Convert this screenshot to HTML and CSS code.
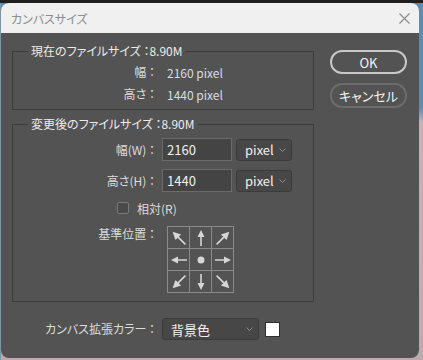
FILE: index.html
```html
<!DOCTYPE html>
<html lang="ja">
<head>
<meta charset="utf-8">
<link rel="stylesheet" href="styles.css">
</head>
<body>
<div class="screen">
  <div class="dialog">
    <div class="titlebar">
      <span class="title">カンバスサイズ</span>
      <svg class="close" width="11" height="11" viewBox="0 0 11 11"><path d="M0.5 0.5 L10.5 10.5 M10.5 0.5 L0.5 10.5" stroke="#8a8a8a" stroke-width="1.1" fill="none"/></svg>
    </div>
    <div class="content">
      <div class="main">
        <fieldset class="group g1">
          <legend>現在のファイルサイズ ：8.90M</legend>
          <div class="row info"><span class="label">幅 ：</span><span class="value">2160 pixel</span></div>
          <div class="row info"><span class="label">高さ ：</span><span class="value">1440 pixel</span></div>
        </fieldset>
        <fieldset class="group g2">
          <legend>変更後のファイルサイズ ：8.90M</legend>
          <div class="row field"><span class="label">幅(W) ：</span><div class="input">2160</div><div class="select unit"><span>pixel</span><svg class="chev" width="7" height="4" viewBox="0 0 7 4"><path d="M0.5 0.5 L3.5 3.5 L6.5 0.5" stroke="#8e8e8e" fill="none"/></svg></div></div>
          <div class="row field"><span class="label">高さ(H) ：</span><div class="input">1440</div><div class="select unit"><span>pixel</span><svg class="chev" width="7" height="4" viewBox="0 0 7 4"><path d="M0.5 0.5 L3.5 3.5 L6.5 0.5" stroke="#8e8e8e" fill="none"/></svg></div></div>
          <div class="row check"><span class="box"></span><span class="check-text">相対(R)</span></div>
          <div class="row anchor">
            <span class="label">基準位置 ：</span>
            <div class="grid">
              <div class="cell"><svg viewBox="0 0 22 22"><g transform="rotate(-45 11 11)"><line x1="11" y1="8" x2="11" y2="20" class="shaft"/><polygon points="11,2 7,10 15,10" class="head"/></g></svg></div>
              <div class="cell"><svg viewBox="0 0 22 22"><g><line x1="11" y1="8" x2="11" y2="19" class="shaft"/><polygon points="11,3 7.5,10 14.5,10" class="head"/></g></svg></div>
              <div class="cell"><svg viewBox="0 0 22 22"><g transform="rotate(45 11 11)"><line x1="11" y1="8" x2="11" y2="20" class="shaft"/><polygon points="11,2 7,10 15,10" class="head"/></g></svg></div>
              <div class="cell"><svg viewBox="0 0 22 22"><g transform="rotate(-90 11 11)"><line x1="11" y1="8" x2="11" y2="19" class="shaft"/><polygon points="11,3 7.5,10 14.5,10" class="head"/></g></svg></div>
              <div class="cell"><svg viewBox="0 0 22 22"><circle cx="11" cy="11" r="3.5" class="head"/></svg></div>
              <div class="cell"><svg viewBox="0 0 22 22"><g transform="rotate(90 11 11)"><line x1="11" y1="8" x2="11" y2="19" class="shaft"/><polygon points="11,3 7.5,10 14.5,10" class="head"/></g></svg></div>
              <div class="cell"><svg viewBox="0 0 22 22"><g transform="rotate(-135 11 11)"><line x1="11" y1="8" x2="11" y2="20" class="shaft"/><polygon points="11,2 7,10 15,10" class="head"/></g></svg></div>
              <div class="cell"><svg viewBox="0 0 22 22"><g transform="rotate(180 11 11)"><line x1="11" y1="8" x2="11" y2="19" class="shaft"/><polygon points="11,3 7.5,10 14.5,10" class="head"/></g></svg></div>
              <div class="cell"><svg viewBox="0 0 22 22"><g transform="rotate(135 11 11)"><line x1="11" y1="8" x2="11" y2="20" class="shaft"/><polygon points="11,2 7,10 15,10" class="head"/></g></svg></div>
            </div>
          </div>
        </fieldset>
        <div class="row ext">
          <span class="label">カンバス拡張カラー ：</span>
          <div class="select color"><span>背景色</span><svg class="chev" width="7" height="4" viewBox="0 0 7 4"><path d="M0.5 0.5 L3.5 3.5 L6.5 0.5" stroke="#8e8e8e" fill="none"/></svg></div>
          <span class="swatch"></span>
        </div>
      </div>
      <div class="buttons">
        <button class="btn ok">OK</button>
        <button class="btn cancel">キャンセル</button>
      </div>
    </div>
  </div>
</div>
</body>
</html>
```
FILE: styles.css
```css
html, body {
  margin: 0;
  padding: 0;
}
body {
  width: 423px;
  height: 360px;
  overflow: hidden;
  background:
    linear-gradient(#1f1f1f 0 3px, transparent 3px),
    linear-gradient(to right, #7b97aa 0 1px, transparent 1px),
    linear-gradient(to bottom, #5a8db6 0 30%, #c6b2b6 34%, #bda9ae 100%);
}
.screen {
  padding: 3px 0 0 1px;
}
.dialog {
  width: 418px;
  height: 355px;
  border-radius: 8px;
  overflow: hidden;
  background: #535353;
  display: flex;
  flex-direction: column;
  font-family: "Noto Sans CJK JP", sans-serif;
  font-feature-settings: "palt";
}
.titlebar {
  height: 30px;
  flex: none;
  background: #f0f0f0;
  display: flex;
  align-items: center;
  justify-content: space-between;
  padding: 0 9px 0 10px;
  color: #8c8c8c;
  font-size: 12px;
}
.close {
  display: block;
}
.content {
  display: flex;
  padding-left: 11px;
}
.main {
  width: 302px;
  padding-top: 10px;
  display: flex;
  flex-direction: column;
}
.group {
  margin: 0;
  border: 1px solid #3c3c3c;
  padding: 0;
  min-width: 0;
}
legend {
  margin-left: 15px;
  padding: 0 3px;
  font-size: 12px;
  line-height: 16px;
  color: #ececec;
}
.g1 {
  padding: 2px 0 4px;
}
.g2 {
  margin-top: 6px;
  padding: 6px 0 8px;
}
.row {
  display: flex;
  align-items: center;
}
.label {
  width: 142px;
  flex: none;
  text-align: right;
  color: #dcdcdc;
  font-size: 12px;
  line-height: 16px;
}
.info {
  height: 22px;
}
.value {
  margin-left: 12px;
  color: #d6dce3;
  font-size: 12px;
}
.field {
  height: 23px;
}
.field + .field {
  margin-top: 8px;
}
.input {
  margin-left: 7px;
  width: 70px;
  height: 23px;
  box-sizing: border-box;
  background: #444444;
  border: 1px solid #6a6a6a;
  color: #f2f2f2;
  font-size: 13px;
  line-height: 21px;
  padding-left: 4px;
}
.select {
  box-sizing: border-box;
  height: 22px;
  background: #474747;
  border: 1px solid #3b3b3b;
  border-radius: 3px;
  display: flex;
  align-items: center;
  justify-content: space-between;
  color: #f0f0f0;
  font-size: 13px;
}
.unit {
  margin-left: 4px;
  width: 56px;
  padding: 0 5px 0 8px;
}
.chev {
  display: block;
}
.check {
  margin-top: 8px;
  height: 16px;
  padding-left: 104px;
}
.box {
  width: 12px;
  height: 12px;
  box-sizing: border-box;
  border: 1px solid #7a7a7a;
  border-radius: 2px;
  background: #4a4a4a;
}
.check-text {
  margin-left: 8px;
  color: #dcdcdc;
  font-size: 12px;
}
.anchor {
  margin-top: 10px;
  align-items: flex-start;
}
.grid {
  margin-left: 12px;
  display: grid;
  grid-template-columns: repeat(3, 22px);
  grid-template-rows: repeat(3, 22px);
  border-left: 1px solid #8a8a8a;
  border-top: 1px solid #8a8a8a;
}
.cell {
  border-right: 1px solid #8a8a8a;
  border-bottom: 1px solid #8a8a8a;
}
.cell svg {
  display: block;
  width: 22px;
  height: 22px;
}
.shaft {
  stroke: #d6d6d6;
  stroke-width: 1.6;
}
.head {
  fill: #d6d6d6;
}
.ext {
  margin-top: 16px;
  height: 22px;
}
.ext .label {
  width: 143px;
}
.color {
  margin-left: 7px;
  width: 97px;
  padding: 0 5px 0 8px;
}
.swatch {
  margin-left: 6px;
  width: 15px;
  height: 15px;
  box-sizing: border-box;
  background: #ffffff;
  border: 1px solid #2e2e2e;
}
.buttons {
  margin-left: 16px;
  padding-top: 17px;
  display: flex;
  flex-direction: column;
  gap: 9px;
}
.btn {
  width: 77px;
  height: 24px;
  box-sizing: border-box;
  border-radius: 12px;
  background: #535353;
  font-family: "Noto Sans CJK JP", sans-serif;
  font-feature-settings: "palt";
  font-size: 13px;
  color: #f4f4f4;
  padding: 0;
}
.ok {
  border: 2px solid #c8c8c8;
}
.cancel {
  height: 25px;
  border: 2px solid #6c6c6c;
}
```
